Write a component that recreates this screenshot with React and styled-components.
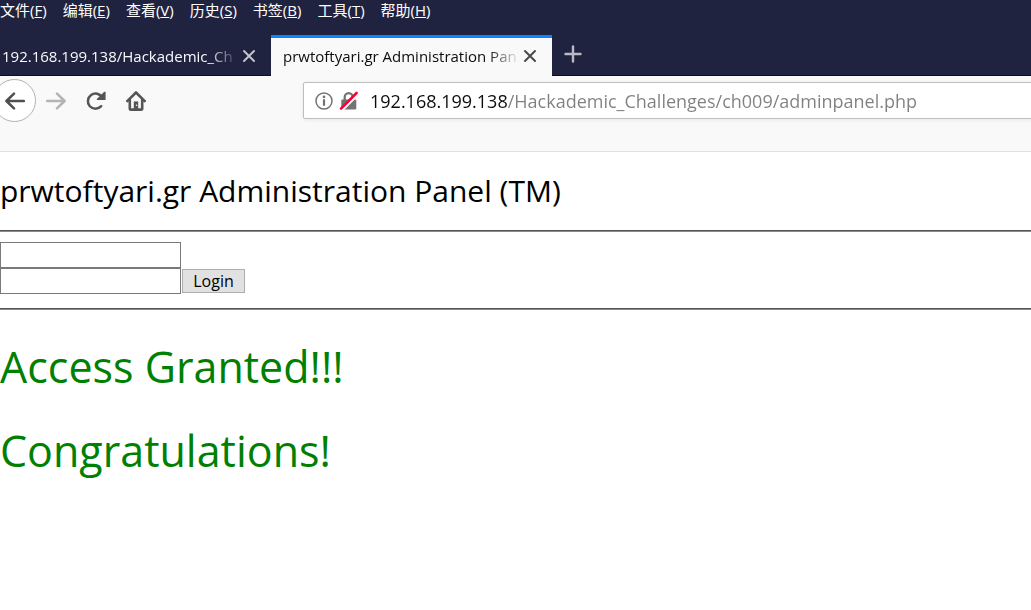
import React from 'react';
import styled, { createGlobalStyle } from 'styled-components';

const GlobalStyle = createGlobalStyle`
  * { box-sizing: border-box; }
  body {
    margin: 0;
    background: #fff;
    color: #000;
    font-family: "Open Sans", "Noto Sans CJK SC", sans-serif;
  }
  button { font-family: inherit; margin: 0; }
  #root { overflow-x: hidden; }
`;

const MenuBar = styled.nav`
  display: flex;
  gap: 16px;
  height: 35px;
  background: #20233f;
`;

const MenuItem = styled.button`
  border: 0;
  padding: 0;
  background: none;
  color: #fff;
  height: 20px;
  font-size: 15px;
  line-height: 20px;
  white-space: nowrap;
`;

const TabStrip = styled.div`
  display: flex;
  height: 41px;
  background: #20233f;
  border-bottom: 1px solid #0f0d24;
`;

const Tab = styled.div`
  display: flex;
  align-items: center;
  flex: none;
  height: 41px;
  width: ${(p) => (p.$active ? 281 : 271)}px;
  padding: 0 12px 3px ${(p) => (p.$active ? 12 : 2)}px;
  border-top: 3px solid ${(p) => (p.$active ? '#0a84ff' : 'transparent')};
  background: ${(p) => (p.$active ? '#f9f9fa' : 'transparent')};
  color: ${(p) => (p.$active ? '#0c0c0d' : '#f9f9fa')};
`;

const TabTitle = styled.button`
  flex: 1;
  min-width: 0;
  border: 0;
  padding: 0;
  background: none;
  color: inherit;
  font-size: 15px;
  line-height: 22px;
  text-align: left;
  white-space: nowrap;
  overflow: hidden;
  mask-image: linear-gradient(to left, transparent, #000 32px);
`;

const IconButton = styled.button`
  display: flex;
  align-items: center;
  justify-content: center;
  flex: none;
  width: ${(p) => p.$size}px;
  height: ${(p) => p.$size}px;
  border: 0;
  padding: 0;
  background: none;
  color: ${(p) => p.$color};
`;

const NewTab = styled(IconButton)`
  height: 38px;
`;

const Toolbar = styled.div`
  display: flex;
  align-items: flex-start;
  height: 76px;
  background: #f9f9fa;
  border-bottom: 1px solid #e0e0e1;
`;

const NavButtons = styled.div`
  display: flex;
  align-items: center;
  flex: none;
  width: 303px;
  height: 49px;
`;

const BackButton = styled(IconButton)`
  margin-left: -7px;
  border: 1px solid #b1b1b1;
  border-radius: 50%;
  background: #fff;
`;

const AddressBar = styled.label`
  display: flex;
  align-items: center;
  flex: 1;
  height: 37px;
  margin: 6px -4px 0 0;
  padding-left: 11px;
  border: 1px solid #bebebe;
  border-radius: 2px;
  background: #fff;
  box-shadow: 0 1px 4px rgba(0, 0, 0, 0.07);
`;

const AddressIcons = styled.span`
  display: flex;
  align-items: center;
  gap: 6px;
  margin-right: 11px;
`;

const AddressInput = styled.input`
  flex: 1;
  min-width: 0;
  height: 35px;
  border: 0;
  padding: 0;
  outline: 0;
  font-family: inherit;
  font-size: 18px;
  color: transparent;
  caret-color: #000;
  background: linear-gradient(to right, #0c0c0d 137px, #808080 137px);
  background-clip: text;
  -webkit-background-clip: text;
`;

const Page = styled.main`
  padding-top: 16px;
`;

const Title = styled.h1`
  margin: 0 0 16px;
  font-size: 30px;
  font-weight: 400;
  line-height: 46px;
  white-space: nowrap;
`;

const Rule = styled.hr`
  height: 2px;
  margin: 0;
  border: 0;
  border-top: 1px solid #555;
  border-bottom: 1px solid #8a8a8a;
`;

const LoginForm = styled.form`
  display: grid;
  grid-template-columns: 181px auto;
  justify-content: start;
  align-items: center;
  column-gap: 1px;
  padding: 10px 0 14px;
`;

const Field = styled.input`
  grid-column: 1;
  width: 181px;
  height: 26px;
  border: 1px solid #7a7a7a;
  padding: 1px 4px;
  background: #fff;
  font-family: inherit;
  font-size: 16px;
`;

const LoginButton = styled.button`
  width: 63px;
  height: 24px;
  border: 1px solid #adadad;
  padding: 0;
  background: #e1e1e1;
  color: #000;
  font-size: 16px;
  line-height: 22px;
`;

const Messages = styled.section`
  display: grid;
  gap: 24px;
  padding-top: 27px;
`;

const Message = styled.p`
  margin: 0;
  color: #008000;
  font-size: 43px;
  line-height: 60px;
`;

const menus = [
  ['文件', 'F'],
  ['编辑', 'E'],
  ['查看', 'V'],
  ['历史', 'S'],
  ['书签', 'B'],
  ['工具', 'T'],
  ['帮助', 'H'],
];

const CloseIcon = () => (
  <svg width="14" height="14" viewBox="0 0 14 14" fill="none" stroke="currentColor" strokeWidth="2" strokeLinecap="round">
    <path d="M2 2l10 10M12 2L2 12" />
  </svg>
);

const PlusIcon = () => (
  <svg width="18" height="18" viewBox="0 0 18 18" fill="none" stroke="currentColor" strokeWidth="2.4" strokeLinecap="round">
    <path d="M9 1.5v15M1.5 9h15" />
  </svg>
);

const ArrowIcon = ({ flip }) => (
  <svg width="20" height="20" viewBox="0 0 20 20" fill="none" stroke="currentColor" strokeWidth="2.5" strokeLinecap="round" strokeLinejoin="round">
    <path d={flip ? 'M1 10h17M11 2.6L18.6 10L11 17.4' : 'M19 10H2M9 2.6L1.4 10L9 17.4'} />
  </svg>
);

const ReloadIcon = () => (
  <svg width="20" height="20" viewBox="0 0 20 20" fill="none" stroke="currentColor" strokeWidth="2.5" strokeLinecap="round">
    <path d="M15.2 15.2A7.6 7.6 0 1 1 16.2 6.6" />
    <path d="M19.6 1.2V9.1H11.4C10.6 9.1 10.6 8.2 11.1 7.8L18 1.1C18.6 .6 19.6.6 19.6 1.2Z" fill="currentColor" stroke="none" />
  </svg>
);

const HomeIcon = () => (
  <svg width="20" height="20" viewBox="0 0 20 20" fill="none" stroke="currentColor" strokeWidth="2.6" strokeLinecap="round" strokeLinejoin="round">
    <path d="M1.3 10.2L10 1.5l8.7 8.7" />
    <path d="M3.8 9v8.4q0 1.2 1.2 1.2h10q1.2 0 1.2-1.2V9" />
    <path d="M7.8 10.4h4.4V18H7.8z" fill="currentColor" stroke="none" />
    <circle cx="10.6" cy="14.3" r=".8" fill="#f9f9fa" stroke="none" />
  </svg>
);

const InfoIcon = () => (
  <svg width="18" height="18" viewBox="0 0 18 18" fill="none" stroke="#737373">
    <circle cx="9" cy="9" r="8" strokeWidth="1.5" />
    <path d="M9 8v5" strokeWidth="2.2" strokeLinecap="round" />
    <circle cx="9" cy="4.9" r="1.3" fill="#737373" stroke="none" />
  </svg>
);

const InsecureIcon = () => (
  <svg width="20" height="20" viewBox="0 0 20 20" fill="none">
    <path d="M5.7 9V6.2a4 4 0 0 1 8 0V9" stroke="#737373" strokeWidth="2.3" />
    <rect x="2.3" y="8.4" width="15" height="10" rx="1.2" fill="#737373" />
    <path d="M3.3 19.3L19.3 3.3" stroke="#fff" strokeWidth="2.2" />
    <path d="M2 17.6L17.6 2" stroke="#ff0039" strokeWidth="2.6" strokeLinecap="round" />
  </svg>
);

export default function App() {
  return (
    <>
      <GlobalStyle />
      <header>
        <MenuBar>
          {menus.map(([label, key]) => (
            <MenuItem key={key} type="button">
              {label}(<u>{key}</u>)
            </MenuItem>
          ))}
        </MenuBar>
        <TabStrip>
          <Tab>
            <TabTitle type="button">192.168.199.138/Hackademic_Ch</TabTitle>
            <IconButton type="button" aria-label="Close tab" $size={20} $color="#c3c4cb"><CloseIcon /></IconButton>
          </Tab>
          <Tab $active>
            <TabTitle type="button">prwtoftyari.gr Administration Pan</TabTitle>
            <IconButton type="button" aria-label="Close tab" $size={20} $color="#4a4a4b"><CloseIcon /></IconButton>
          </Tab>
          <NewTab type="button" aria-label="New tab" $size={42} $color="#b9bac3"><PlusIcon /></NewTab>
        </TabStrip>
        <Toolbar>
          <NavButtons>
            <BackButton type="button" aria-label="Back" $size={43} $color="#4f4f50"><ArrowIcon /></BackButton>
            <IconButton type="button" aria-label="Forward" $size={40} $color="#b4b4b5"><ArrowIcon flip /></IconButton>
            <IconButton type="button" aria-label="Reload" $size={40} $color="#555556"><ReloadIcon /></IconButton>
            <IconButton type="button" aria-label="Home" $size={40} $color="#555556"><HomeIcon /></IconButton>
          </NavButtons>
          <AddressBar>
            <AddressIcons><InfoIcon /><InsecureIcon /></AddressIcons>
            <AddressInput
              type="text"
              aria-label="Address"
              defaultValue="192.168.199.138/Hackademic_Challenges/ch009/adminpanel.php"
            />
          </AddressBar>
        </Toolbar>
      </header>
      <Page>
        <Title>prwtoftyari.gr Administration Panel (TM)</Title>
        <Rule />
        <LoginForm onSubmit={(e) => e.preventDefault()}>
          <Field type="text" aria-label="Username" />
          <Field type="password" aria-label="Password" />
          <LoginButton type="submit">Login</LoginButton>
        </LoginForm>
        <Rule />
        <Messages>
          <Message>Access Granted!!!</Message>
          <Message>Congratulations!</Message>
        </Messages>
      </Page>
    </>
  );
}
